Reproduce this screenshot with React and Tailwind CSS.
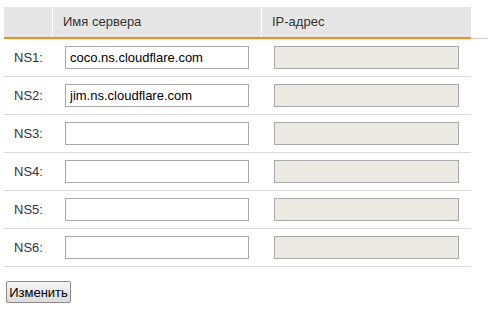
import React from 'react';

const rows = [
  { id: 'NS1', name: 'coco.ns.cloudflare.com' },
  { id: 'NS2', name: 'jim.ns.cloudflare.com' },
  { id: 'NS3', name: '' },
  { id: 'NS4', name: '' },
  { id: 'NS5', name: '' },
  { id: 'NS6', name: '' },
];

const App = () => {
  return (
    <div
      className="min-h-[314px] bg-white pt-[7px] pl-[4px] text-[13px] text-[#333]"
      style={{ fontFamily: '"Liberation Sans", Arial, sans-serif' }}
    >
      {/* Header */}
      <div className="flex">
        <div className="flex w-[467px] h-[32px] bg-[#e6e6e6] border-b-2 border-[#f68b1f]">
          <div className="w-[49px] border-r border-white" />
          <div className="w-[209px] flex items-center pl-[10px] border-r border-white">Имя сервера</div>
          <div className="flex-1 flex items-center pl-[10px]">IP-адрес</div>
        </div>
        <div className="flex-1 self-end h-[2px] border-b border-[#cfcfcf]" />
      </div>

      {/* Rows */}
      <div className="w-[467px]">
        {rows.map((row) => (
          <div key={row.id} className="flex items-center h-[38px] border-b border-[#d9d9d9]">
            <div className="w-[50px] pl-[10px]">{row.id}:</div>
            <div className="w-[209px] pl-[11px]">
              <input
                type="text"
                defaultValue={row.name}
                className="w-[184px] h-[23px] border border-[#a9a9a9] bg-white px-[4px] text-[13px] text-black outline-none"
                style={{ fontFamily: '"Liberation Sans", Arial, sans-serif' }}
              />
            </div>
            <div className="flex-1 pl-[11px]">
              <input
                type="text"
                disabled
                className="w-[185px] h-[23px] border border-[#a9a9a9] bg-[#eae9e2]"
              />
            </div>
          </div>
        ))}
      </div>

      <button
        className="mt-[14px] ml-[2px] w-[65px] h-[22px] rounded-[2px] border border-[#8a8a8a] bg-gradient-to-b from-[#f6f6f6] to-[#dcdcdc] text-[13px] text-black leading-none"
        style={{ fontFamily: '"Liberation Sans", Arial, sans-serif' }}
      >
        Изменить
      </button>
    </div>
  );
};

export default App;
